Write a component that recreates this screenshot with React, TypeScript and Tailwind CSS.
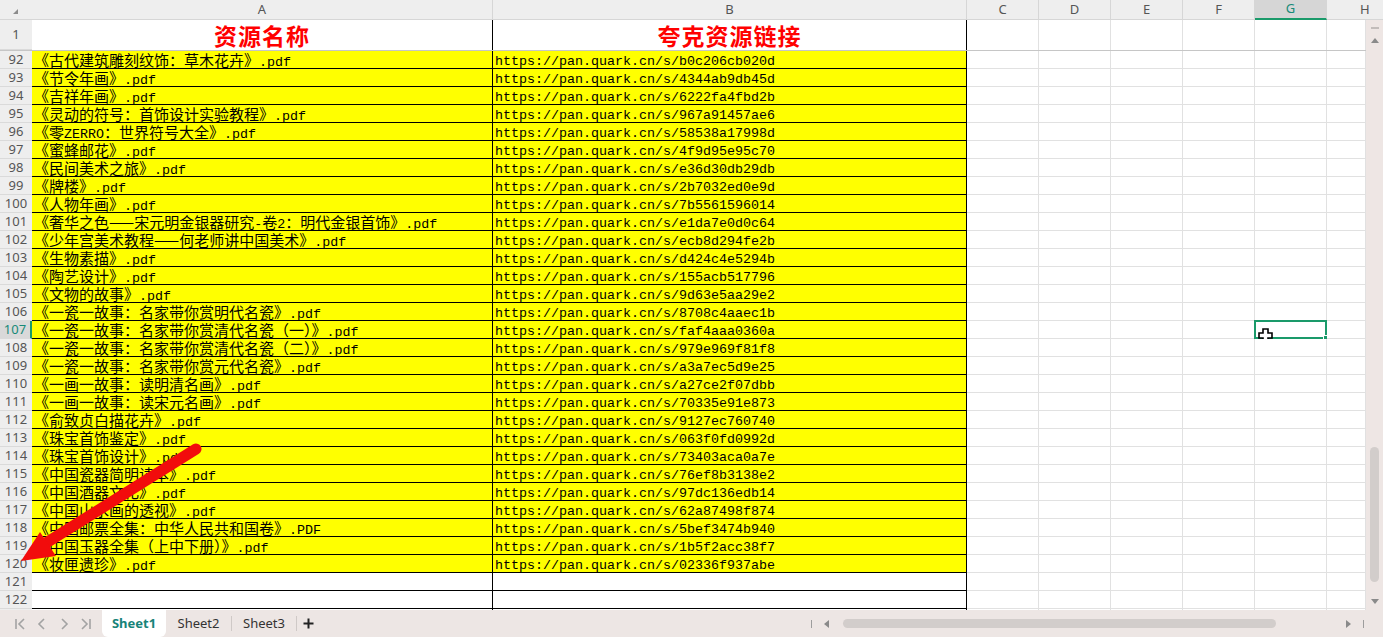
import React from 'react';

const rows: { n: number; name: string; code: string }[] = [
  { n: 92, name: '《古代建筑雕刻纹饰：草木花卉》.pdf', code: 'b0c206cb020d' },
  { n: 93, name: '《节令年画》.pdf', code: '4344ab9db45d' },
  { n: 94, name: '《吉祥年画》.pdf', code: '6222fa4fbd2b' },
  { n: 95, name: '《灵动的符号：首饰设计实验教程》.pdf', code: '967a91457ae6' },
  { n: 96, name: '《零ZERRO：世界符号大全》.pdf', code: '58538a17998d' },
  { n: 97, name: '《蜜蜂邮花》.pdf', code: '4f9d95e95c70' },
  { n: 98, name: '《民间美术之旅》.pdf', code: 'e36d30db29db' },
  { n: 99, name: '《牌楼》.pdf', code: '2b7032ed0e9d' },
  { n: 100, name: '《人物年画》.pdf', code: '7b5561596014' },
  { n: 101, name: '《奢华之色——宋元明金银器研究-卷2：明代金银首饰》.pdf', code: 'e1da7e0d0c64' },
  { n: 102, name: '《少年宫美术教程——何老师讲中国美术》.pdf', code: 'ecb8d294fe2b' },
  { n: 103, name: '《生物素描》.pdf', code: 'd424c4e5294b' },
  { n: 104, name: '《陶艺设计》.pdf', code: '155acb517796' },
  { n: 105, name: '《文物的故事》.pdf', code: '9d63e5aa29e2' },
  { n: 106, name: '《一瓷一故事：名家带你赏明代名瓷》.pdf', code: '8708c4aaec1b' },
  { n: 107, name: '《一瓷一故事：名家带你赏清代名瓷（一）》.pdf', code: 'faf4aaa0360a' },
  { n: 108, name: '《一瓷一故事：名家带你赏清代名瓷（二）》.pdf', code: '979e969f81f8' },
  { n: 109, name: '《一瓷一故事：名家带你赏元代名瓷》.pdf', code: 'a3a7ec5d9e25' },
  { n: 110, name: '《一画一故事：读明清名画》.pdf', code: 'a27ce2f07dbb' },
  { n: 111, name: '《一画一故事：读宋元名画》.pdf', code: '70335e91e873' },
  { n: 112, name: '《俞致贞白描花卉》.pdf', code: '9127ec760740' },
  { n: 113, name: '《珠宝首饰鉴定》.pdf', code: '063f0fd0992d' },
  { n: 114, name: '《珠宝首饰设计》.pdf', code: '73403aca0a7e' },
  { n: 115, name: '《中国瓷器简明读本》.pdf', code: '76ef8b3138e2' },
  { n: 116, name: '《中国酒器文化》.pdf', code: '97dc136edb14' },
  { n: 117, name: '《中国山水画的透视》.pdf', code: '62a87498f874' },
  { n: 118, name: '《中国邮票全集：中华人民共和国卷》.PDF', code: '5bef3474b940' },
  { n: 119, name: '《中国玉器全集（上中下册）》.pdf', code: '1b5f2acc38f7' },
  { n: 120, name: '《妆匣遗珍》.pdf', code: '02336f937abe' }
];

const extraCols = ['C', 'D', 'E', 'F', 'G', 'H'];

// ascii half width, everything else full width (SimSun look)
const Mixed = ({ text }: { text: string }) => {
  const parts = text.split(/([\x00-\x7F]+)/).filter((p) => p !== '');
  return (
    <>
      {parts.map((p, i) =>
        /^[\x00-\x7F]+$/.test(p) ? (
          <span key={i} className="font-['Liberation_Mono',monospace] text-[13.33px]">
            {p}
          </span>
        ) : (
          <span key={i} className="font-['Noto_Sans_CJK_SC',sans-serif] text-[15px]">
            {p}
          </span>
        )
      )}
    </>
  );
};

const RowHead = ({ n, active }: { n: number; active?: boolean }) => (
  <div
    className={`${
      active
        ? 'bg-[#d9d9d9] text-[#178a78] border-r-2 border-r-[#1a9a6a]'
        : 'bg-[#eeeeee] text-[#555]'
    } w-[32px] shrink-0 h-full border-b border-[#dadada] flex items-center justify-center text-[13px] font-['Noto_Sans',sans-serif]`}>
    {n}
  </div>
);

const EmptyCells = ({ selected }: { selected?: boolean }) => (
  <>
    {extraCols.map((c) => (
      <div
        key={c}
        className={`${
          c === 'H' ? 'flex-1' : 'w-[72px]'
        } shrink-0 h-full border-r border-b border-[#e1e1e1] bg-white relative`}>
        {selected && c === 'G' && (
          <>
            <div className="absolute -left-px -top-px -right-px -bottom-px border-2 border-[#1a9a6a]" />
            <div className="absolute -right-[3px] -bottom-[3px] w-[6px] h-[6px] bg-[#1a9a6a] border border-white" />
            <svg className="absolute left-[3px] top-[7px]" width="15" height="15" viewBox="0 0 15 15">
              <path
                d="M5 1h5v4h4v5h-4v4H5v-4H1V5h4z"
                fill="#fff"
                stroke="#000"
                strokeWidth="1.6"
              />
            </svg>
          </>
        )}
      </div>
    ))}
  </>
);

const DataRow = ({ n, name, code }: { n: number; name: string; code: string }) => (
  <div className="flex h-[18px] shrink-0">
    <RowHead n={n} active={n === 107} />
    <div className="w-[461px] shrink-0 h-full bg-[#ffff00] border-r border-b border-black pl-[2px] leading-[17px] whitespace-nowrap text-black">
      <Mixed text={name} />
    </div>
    <div className="w-[474px] shrink-0 h-full bg-[#ffff00] border-r border-b border-black pl-[2px] leading-[17px] whitespace-nowrap text-black">
      <Mixed text={`https://pan.quark.cn/s/${code}`} />
    </div>
    <EmptyCells selected={n === 107} />
  </div>
);

const BlankRow = ({ n }: { n: number }) => (
  <div className="flex h-[18px] shrink-0">
    <RowHead n={n} />
    <div className="w-[461px] shrink-0 h-full bg-white border-r border-b border-black" />
    <div className="w-[474px] shrink-0 h-full bg-white border-r border-b border-black" />
    <EmptyCells />
  </div>
);

const Tri = ({ dir }: { dir: 'l' | 'r' | 'u' | 'd' }) => {
  const pts = {
    l: '5,0 5,8 0,4',
    r: '0,0 0,8 5,4',
    u: '0,5 8,5 4,0',
    d: '0,0 8,0 4,5'
  }[dir];
  const w = dir === 'l' || dir === 'r' ? 5 : 8;
  const h = dir === 'l' || dir === 'r' ? 8 : 5;
  return (
    <svg width={w} height={h} viewBox={`0 0 ${w} ${h}`}>
      <polygon points={pts} fill="#8a8a8a" />
    </svg>
  );
};

const NavIcon = ({ kind }: { kind: 'first' | 'prev' | 'next' | 'last' }) => (
  <svg width="12" height="14" viewBox="0 0 12 14" fill="none" stroke="#a3a3a3" strokeWidth="1.6">
    {kind === 'first' && (
      <>
        <path d="M2 2v10" />
        <path d="M10 2L5 7l5 5" />
      </>
    )}
    {kind === 'prev' && <path d="M8 2L3 7l5 5" />}
    {kind === 'next' && <path d="M4 2l5 5-5 5" />}
    {kind === 'last' && (
      <>
        <path d="M2 2l5 5-5 5" />
        <path d="M10 2v10" />
      </>
    )}
  </svg>
);

export default function App() {
  return (
    <div className="relative w-[1383px] h-[637px] overflow-hidden bg-white flex flex-col select-none">
      {/* column headers */}
      <div className="flex h-[20px] shrink-0 bg-[#eeeeee] text-[13px] text-[#555] font-['Noto_Sans',sans-serif]">
        <div className="w-[32px] shrink-0 h-full border-b border-[#d6d6d6] flex items-end justify-end pr-[14px] pb-[5px]">
          <svg width="5" height="5" viewBox="0 0 5 5">
            <polygon points="5,0 5,5 0,5" fill="#8c8c8c" />
          </svg>
        </div>
        <div className="w-[461px] shrink-0 h-full border-r border-b border-[#d6d6d6] flex items-center justify-center">
          A
        </div>
        <div className="w-[474px] shrink-0 h-full border-r border-b border-[#d6d6d6] flex items-center justify-center">
          B
        </div>
        {extraCols.map((c) =>
          c === 'G' ? (
            <div
              key={c}
              className="w-[72px] shrink-0 h-full bg-[#d6d6d6] border-r border-[#d6d6d6] border-b-2 border-b-[#1a9a6a] text-[#178a78] flex items-center justify-center">
              {c}
            </div>
          ) : c === 'H' ? (
            <div key={c} className="flex-1 h-full border-b border-[#d6d6d6] flex items-center pl-[33px]">
              {c}
            </div>
          ) : (
            <div
              key={c}
              className="w-[72px] shrink-0 h-full border-r border-b border-[#d6d6d6] flex items-center justify-center">
              {c}
            </div>
          )
        )}
      </div>

      <div className="flex h-[590px] shrink-0">
        {/* sheet body */}
        <div className="flex-1 flex flex-col overflow-hidden">
          <div className="flex h-[30px] shrink-0">
            <RowHead n={1} />
            <div className="w-[461px] shrink-0 h-full bg-white border-r border-black flex items-center justify-center text-[#ff0000] text-[23px] font-bold font-['Noto_Sans_CJK_SC',sans-serif] tracking-[1px]">
              资源名称
            </div>
            <div className="w-[474px] shrink-0 h-full bg-white border-r border-black flex items-center justify-center text-[#ff0000] text-[23px] font-bold font-['Noto_Sans_CJK_SC',sans-serif] tracking-[1px]">
              夸克资源链接
            </div>
            {extraCols.map((c) => (
              <div
                key={c}
                className={`${c === 'H' ? 'flex-1' : 'w-[72px]'} shrink-0 h-full border-r border-[#e1e1e1]`}
              />
            ))}
          </div>
          <div className="h-[2px] shrink-0 bg-[#c6c6c6]" />
          <div className="flex flex-col -mt-px">
            {rows.map((r) => (
              <DataRow key={r.n} {...r} />
            ))}
            <BlankRow n={121} />
            <BlankRow n={122} />
            <BlankRow n={123} />
          </div>
        </div>

        {/* vertical scrollbar */}
        <div className="w-[17px] shrink-0 bg-[#eee6e4] flex flex-col items-center">
          <div className="mt-[7px] w-[8px] h-[2px] bg-[#c2bcba]" />
          <div className="mt-[9px]">
            <Tri dir="u" />
          </div>
          <div className="mt-[404px] w-[9px] h-[135px] rounded-full bg-[#d2cdcb]" />
          <div className="mt-[17px]">
            <Tri dir="d" />
          </div>
        </div>
      </div>

      {/* bottom bar */}
      <div className="flex-1 bg-[#ede6e4] flex items-stretch text-[13px] font-['Noto_Sans',sans-serif]">
        <div className="flex items-center gap-[10px] pl-[14px] w-[102px] shrink-0">
          <NavIcon kind="first" />
          <NavIcon kind="prev" />
          <NavIcon kind="next" />
          <NavIcon kind="last" />
        </div>
        <div className="w-[64px] bg-white rounded-b-[6px] flex items-center justify-center font-bold text-[#178378]">
          Sheet1
        </div>
        <div className="w-[65px] flex items-center justify-center text-[#333]">Sheet2</div>
        <div className="w-px my-[6px] bg-[#cfc9c7]" />
        <div className="w-[64px] flex items-center justify-center text-[#333]">Sheet3</div>
        <div className="w-px my-[6px] bg-[#cfc9c7]" />
        <div className="pl-[6px] flex items-center">
          <svg width="11" height="11" viewBox="0 0 11 11">
            <path d="M5.5 0.5v10M0.5 5.5h10" stroke="#222" strokeWidth="2" />
          </svg>
        </div>
        <div className="ml-auto flex items-center pr-[19px]">
          <div className="w-px h-[8px] bg-[#9d9d9d]" />
          <div className="ml-[12px]">
            <Tri dir="l" />
          </div>
          <div className="ml-[14px] w-[433px] h-[9px] rounded-full bg-[#d2cdcb]" />
          <div className="ml-[70px]">
            <Tri dir="r" />
          </div>
          <div className="ml-[12px] w-px h-[8px] bg-[#9d9d9d]" />
        </div>
      </div>

      {/* red annotation arrow */}
      <svg className="absolute left-0 top-0 pointer-events-none" width="1383" height="637">
        <line x1="196" y1="449" x2="46" y2="543" stroke="#f20c0c" strokeWidth="11" strokeLinecap="round" />
        <polygon points="21,561 40,532 56,556" fill="#f20c0c" />
      </svg>
    </div>
  );
}
